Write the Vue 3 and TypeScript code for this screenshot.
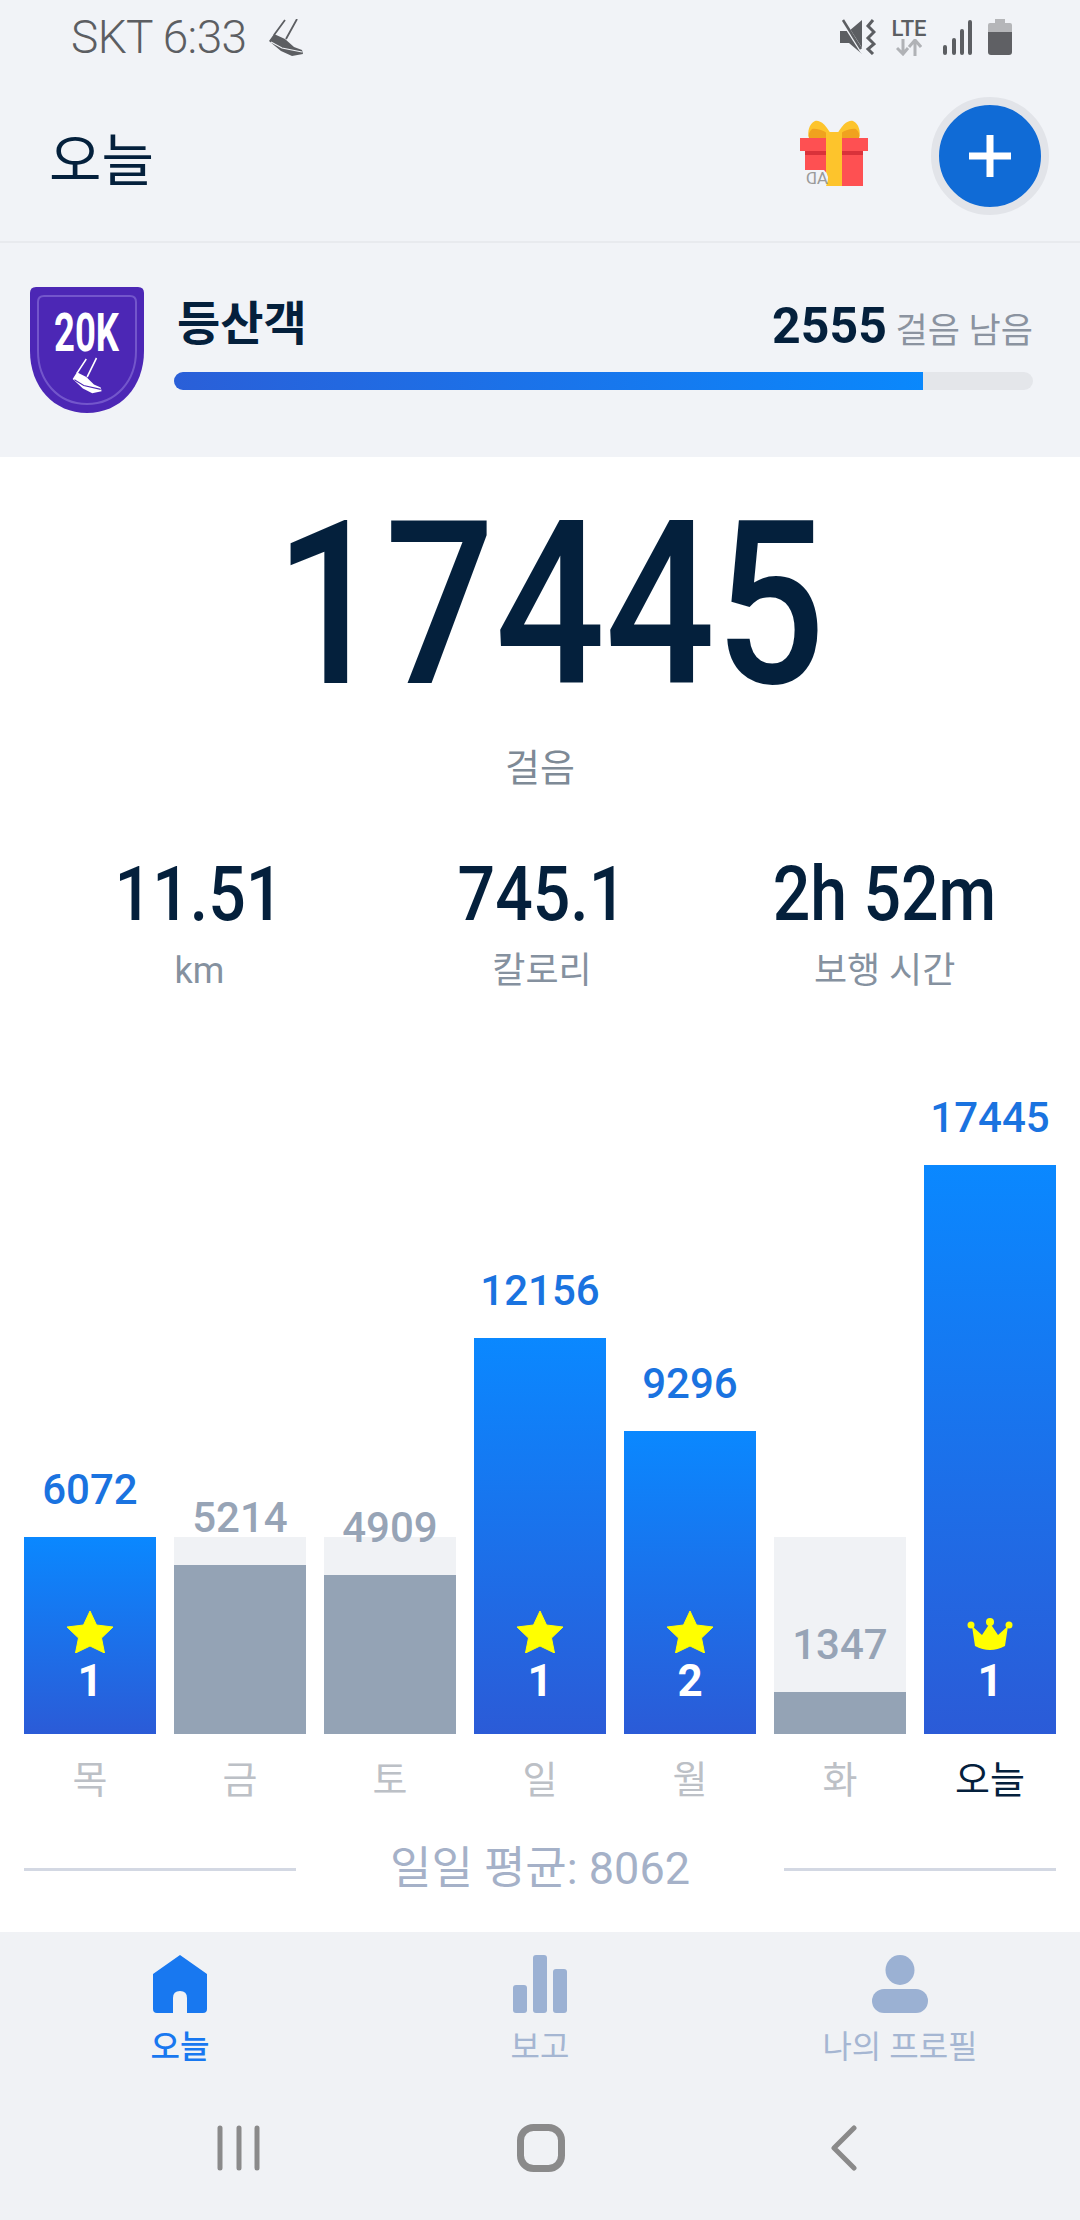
<template>
  <div class="screen">
    <div class="status">
      <div class="status-left">
        <span class="clock">SKT 6:33</span>
        <svg viewBox="0 0 36 37" width="36" height="37">
          <path d="M18 1 L7 16 M30 0 L19 20" stroke="#5c5e62" stroke-width="1.8" fill="none" />
          <path d="M2 22 L7 15 L18 20 L27 28 L35 31 L36 35 L25 37 L14 32 Z" fill="#5c5e62" />
          <path d="M4 23 L15 29 L35 33" stroke="#f1f3f7" stroke-width="1.2" fill="none" />
        </svg>
      </div>
      <div class="status-right">
        <svg viewBox="0 0 36 36" width="36" height="36">
          <path d="M0 12 H9 L22 1 V35 L9 24 H0 Z" fill="#5c5e62" />
          <path d="M2 1 L23 34" stroke="#f1f3f7" stroke-width="4" />
          <path d="M3 1 L21 30" stroke="#5c5e62" stroke-width="2.5" />
          <path d="M33 1 L28 7 L34 13 L28 19 L34 25 L28 30 L33 35" stroke="#5c5e62" stroke-width="3" fill="none" />
        </svg>
        <div class="lte">
          <span>LTE</span>
          <svg viewBox="0 0 26 17" width="26" height="17">
            <path d="M7 0 V14 M1 9 L7 15 L12 9" stroke="#b0b2b6" stroke-width="3" fill="none" />
            <path d="M19 17 V3 M13 8 L19 1 L25 8" stroke="#b0b2b6" stroke-width="3" fill="none" />
          </svg>
        </div>
        <svg viewBox="0 0 31 35" width="31" height="35">
          <path d="M3 27 V33 M12 20 V33 M20 11 V33 M28 2 V33" stroke="#5c5e62" stroke-width="4" stroke-linecap="round" />
        </svg>
        <svg viewBox="0 0 24 36" width="24" height="36">
          <path d="M7 0 H17 V4 H22 Q24 4 24 6 V13 H0 V6 Q0 4 2 4 H7 Z" fill="#b5b6b9" />
          <path d="M0 13 H24 V33 Q24 36 21 36 H3 Q0 36 0 33 Z" fill="#5f6064" />
        </svg>
      </div>
    </div>

    <header class="topbar">
      <h1>오늘</h1>
      <div class="topbar-actions">
        <svg class="gift" viewBox="0 0 68 66" width="68" height="66">
          <path d="M33 18 C26 4 20 0 15 1 C9 4 7 12 9 18 Z" fill="#fdc42c" />
          <path d="M35 18 C42 4 48 0 53 1 C59 4 61 12 59 18 Z" fill="#fdc42c" />
          <path d="M33 18 C27 12 19 8 12 9 C9 12 8 15 9 18 Z M35 18 C41 12 49 8 56 9 C59 12 60 15 59 18 Z" fill="#f0a21e" />
          <rect x="0" y="18" width="68" height="13" fill="#fe5052" />
          <rect x="5" y="31" width="58" height="35" fill="#fe5052" />
          <rect x="5" y="31" width="58" height="4" fill="#d9323a" />
          <rect x="26" y="12" width="16" height="54" fill="#fdc42c" />
          <path d="M0 50 H24 Q31 56 26 66 H0 Z" fill="#f1f3f7" />
          <text x="-28" y="64" transform="scale(-1 1)" class="ad">AD</text>
        </svg>
        <button class="add">
          <svg viewBox="0 0 42 42" width="42" height="42">
            <path d="M21 0 V42 M0 21 H42" stroke="#fff" stroke-width="7" />
          </svg>
        </button>
      </div>
    </header>

    <section class="goal">
      <svg class="badge" viewBox="0 0 114 126" width="114" height="126">
        <path d="M6 0 H108 Q114 0 114 6 V64 C114 100 90 126 57 126 C24 126 0 100 0 64 V6 Q0 0 6 0 Z" fill="#4c27b5" />
        <path d="M14 9 H100 Q106 9 106 15 V64 C106 94 86 117 57 117 C28 117 8 94 8 64 V15 Q8 9 14 9 Z" fill="none" stroke="#7356cb" stroke-width="2" />
        <text x="24" y="64" textLength="65" lengthAdjust="spacingAndGlyphs" class="badge-text">20K</text>
        <g transform="translate(41 71) scale(.85 .95)">
          <path d="M18 1 L7 16 M30 0 L19 20" stroke="#fff" stroke-width="1.8" fill="none" />
          <path d="M2 22 L7 15 L18 20 L27 28 L35 31 L36 35 L25 37 L14 32 Z" fill="#fff" />
          <path d="M4 23 L15 29 L35 33" stroke="#4c27b5" stroke-width="1.2" fill="none" />
        </g>
      </svg>
      <div class="goal-body">
        <div class="goal-top">
          <span class="goal-name">등산객</span>
          <span class="goal-left"><b>2555</b> 걸음 남음</span>
        </div>
        <div class="progress"><div class="progress-fill" :style="{ width: goalPct + '%' }"></div></div>
      </div>
    </section>

    <main class="main">
      <div class="steps"><span>17445</span></div>
      <div class="steps-label">걸음</div>
      <div class="stats">
        <div v-for="s in stats" :key="s.label" class="stat">
          <div class="stat-value"><span>{{ s.value }}</span></div>
          <div class="stat-label">{{ s.label }}</div>
        </div>
      </div>

      <div class="chart">
        <div v-for="d in days" :key="d.label" class="day">
          <div class="plot">
            <div v-if="!d.hit" class="track"></div>
            <div class="column">
              <div class="value" :class="{ hit: d.hit }">{{ d.steps }}</div>
              <div class="bar" :class="{ hit: d.hit }" :style="{ height: d.h + 'px' }">
                <template v-if="d.hit">
                  <svg v-if="d.crown" viewBox="0 0 46 33" width="46" height="33" class="mark crown">
                    <path d="M23 5 L31 17 L41 8 L38 28 Q23 36 8 28 L5 8 L15 17 Z" fill="#ffff00" />
                    <circle cx="23" cy="4" r="4" fill="#ffff00" />
                    <circle cx="4" cy="7" r="3.5" fill="#ffff00" />
                    <circle cx="42" cy="7" r="3.5" fill="#ffff00" />
                  </svg>
                  <svg v-else viewBox="0 0 46 42" width="46" height="42" class="mark">
                    <path d="M23 0 L29.5 14 L46 16 L34.5 27 L37.5 42 L23 35 L8.5 42 L11.5 27 L0 16 L16.5 14 Z" fill="#ffff00" stroke="#ffff00" stroke-linejoin="round" />
                  </svg>
                  <span class="rank">{{ d.rank }}</span>
                </template>
              </div>
            </div>
          </div>
          <div class="day-label" :class="{ today: d.label === '오늘' }">{{ d.label }}</div>
        </div>
      </div>

      <div class="average">
        <span class="rule"></span>
        <span class="average-text">일일 평균: 8062</span>
        <span class="rule"></span>
      </div>
    </main>

    <footer class="footer">
      <nav class="tabs">
        <div class="tab active">
          <svg viewBox="0 0 54 58" width="54" height="58">
            <path d="M27 0 L54 19 V54 Q54 58 50 58 H34 V43 Q34 36 27 36 Q20 36 20 43 V58 H4 Q0 58 0 54 V19 Z" fill="#1878f0" />
          </svg>
          <span>오늘</span>
        </div>
        <div class="tab">
          <svg viewBox="0 0 54 58" width="54" height="58">
            <rect x="0" y="30" width="14" height="28" rx="3" fill="#9bb1d3" />
            <rect x="20" y="0" width="14" height="58" rx="3" fill="#9bb1d3" />
            <rect x="40" y="14" width="14" height="44" rx="3" fill="#9bb1d3" />
          </svg>
          <span>보고</span>
        </div>
        <div class="tab">
          <svg viewBox="0 0 56 58" width="56" height="58">
            <ellipse cx="28" cy="15" rx="14.5" ry="15" fill="#9bb1d3" />
            <rect x="0" y="34" width="56" height="24" rx="12" fill="#9bb1d3" />
          </svg>
          <span>나의 프로필</span>
        </div>
      </nav>
      <div class="sysnav">
        <svg viewBox="0 0 44 46" width="44" height="46">
          <path d="M3 3 V43 M22 3 V43 M40 3 V43" stroke="#8a8a8a" stroke-width="5" stroke-linecap="round" />
        </svg>
        <svg viewBox="0 0 48 48" width="48" height="48">
          <rect x="3.5" y="3.5" width="41" height="41" rx="13" fill="none" stroke="#8a8a8a" stroke-width="7" />
        </svg>
        <svg viewBox="0 0 27 46" width="27" height="46">
          <path d="M24 3 L4 23 L24 43" fill="none" stroke="#8a8a8a" stroke-width="5" stroke-linecap="round" stroke-linejoin="round" />
        </svg>
      </div>
    </footer>
  </div>
</template>

<script setup lang="ts">
interface Day {
  label: string;
  steps: number;
  h: number;
  hit: boolean;
  rank?: number;
  crown?: boolean;
}

const goalPct = 87.2;

const stats = [
  { value: '11.51', label: 'km' },
  { value: '745.1', label: '칼로리' },
  { value: '2h 52m', label: '보행 시간' },
];

const days: Day[] = [
  { label: '목', steps: 6072, h: 197, hit: true, rank: 1 },
  { label: '금', steps: 5214, h: 169, hit: false },
  { label: '토', steps: 4909, h: 159, hit: false },
  { label: '일', steps: 12156, h: 396, hit: true, rank: 1 },
  { label: '월', steps: 9296, h: 303, hit: true, rank: 2 },
  { label: '화', steps: 1347, h: 42, hit: false },
  { label: '오늘', steps: 17445, h: 569, hit: true, rank: 1, crown: true },
];
</script>

<style>
html,
body {
  margin: 0;
  background: #fff;
}
</style>

<style scoped>
.screen {
  width: 1080px;
  height: 2220px;
  display: flex;
  flex-direction: column;
  font-family: Roboto, "Noto Sans CJK KR", sans-serif;
  color: #04203c;
  background: #fff;
  overflow: hidden;
}

.status {
  height: 70px;
  padding: 4px 68px 0 71px;
  box-sizing: border-box;
  display: flex;
  align-items: center;
  justify-content: space-between;
  background: #f1f3f7;
}

.status-left {
  display: flex;
  align-items: center;
  gap: 20px;
}

.clock {
  font-size: 46px;
  font-weight: 300;
  color: #5c5e62;
  letter-spacing: -0.6px;
}

.status-right {
  display: flex;
  align-items: center;
  gap: 15px;
}

.lte {
  display: flex;
  flex-direction: column;
  align-items: center;
  width: 36px;
  font-size: 22px;
  font-weight: 500;
  line-height: 20px;
  color: #5c5e62;
}

.topbar {
  height: 171px;
  padding: 0 31px 0 49px;
  display: flex;
  align-items: center;
  justify-content: space-between;
  background: #f1f3f7;
  border-bottom: 2px solid #e8eaee;
}

.topbar h1 {
  margin: 0;
  font-size: 57px;
  font-weight: 400;
}

.topbar-actions {
  display: flex;
  align-items: center;
  gap: 63px;
}

.gift {
  margin-bottom: 6px;
  overflow: visible;
}

.ad {
  font-family: Roboto, sans-serif;
  font-size: 17px;
  fill: #9a9a9a;
}

.add {
  width: 102px;
  height: 102px;
  box-sizing: content-box;
  padding: 0;
  border: 8px solid #e2e4e9;
  border-radius: 50%;
  background: #106bd6;
  display: flex;
  align-items: center;
  justify-content: center;
}

.goal {
  height: 214px;
  padding: 0 47px 0 30px;
  display: flex;
  align-items: flex-start;
  gap: 30px;
  background: #f1f3f7;
}

.badge {
  margin-top: 44px;
  flex: none;
  overflow: visible;
}

.badge-text {
  font-family: Roboto, sans-serif;
  font-size: 54px;
  font-weight: 700;
  fill: #fff;
}

.goal-body {
  flex: 1;
  margin-top: 45px;
}

.goal-top {
  height: 70px;
  display: flex;
  align-items: flex-end;
  justify-content: space-between;
}

.goal-name {
  margin-left: 3px;
  font-size: 47px;
  font-weight: 700;
  line-height: 68px;
}

.goal-left {
  font-size: 35px;
  color: #8b93a0;
  line-height: 52px;
}

.goal-left b {
  font-size: 50px;
  color: #04203c;
  font-weight: 700;
}

.progress {
  margin-top: 14px;
  height: 18px;
  background: #e4e6ea;
  border-radius: 9px;
  overflow: hidden;
}

.progress-fill {
  height: 100%;
  background: linear-gradient(90deg, #2a5fd8, #0a88fc);
}

.main {
  flex: 1;
  display: flex;
  flex-direction: column;
  align-items: stretch;
  padding: 0 24px;
  background: #fff;
}

.steps {
  margin-top: 28px;
  font-size: 228px;
  font-weight: 500;
  line-height: 240px;
  text-align: center;
}

.steps span {
  display: inline-block;
  margin-left: 20px;
  transform: scaleX(0.85);
}

.steps-label {
  font-size: 38px;
  color: #7e8a96;
  text-align: center;
  line-height: 56px;
  margin-top: 15px;
}

.stats {
  margin-top: 56px;
  padding-left: 4px;
  display: grid;
  grid-template-columns: repeat(3, 1fr);
}

.stat {
  text-align: center;
}

.stat-value {
  font-size: 76px;
  font-weight: 500;
  line-height: 84px;
}

.stat-value span {
  display: inline-block;
  transform: scaleX(0.87);
}

.stat-label {
  font-size: 36px;
  line-height: 48px;
  color: #85919f;
  margin-top: 11px;
}

.chart {
  margin-top: auto;
  display: grid;
  grid-template-columns: repeat(7, 132px);
  gap: 18px;
  align-items: end;
}

.plot {
  display: grid;
  align-items: end;
}

.track,
.column {
  grid-area: 1 / 1;
}

.track {
  height: 197px;
  background: #f0f2f5;
}

.value {
  text-align: center;
  font-size: 42px;
  font-weight: 500;
  line-height: 50px;
  margin-bottom: 22px;
  color: #97a4b6;
}

.value.hit {
  color: #1a73e0;
}

.bar {
  background: #94a3b5;
  display: flex;
  flex-direction: column;
  align-items: center;
  justify-content: flex-end;
  padding-bottom: 28px;
  box-sizing: border-box;
}

.bar.hit {
  background: linear-gradient(180deg, #0a88ff, #2b5bd7);
}

.mark {
  margin-bottom: 3px;
}

.crown {
  margin-bottom: 5px;
}

.rank {
  font-size: 44px;
  font-weight: 700;
  line-height: 50px;
  color: #fff;
}

.day-label {
  margin-top: 20px;
  text-align: center;
  font-size: 38px;
  line-height: 52px;
  color: #bcc0c6;
}

.day-label.today {
  color: #04203c;
}

.average {
  margin-top: 33px;
  margin-bottom: 33px;
  display: flex;
  align-items: center;
  justify-content: space-between;
}

.rule {
  width: 272px;
  height: 3px;
  background: #d3d8e3;
}

.average-text {
  font-size: 45px;
  line-height: 60px;
  color: #a5b1c8;
}

.footer {
  height: 288px;
  background: #f0f2f5;
}

.tabs {
  display: grid;
  grid-template-columns: repeat(3, 1fr);
  padding-top: 23px;
}

.tab {
  display: flex;
  flex-direction: column;
  align-items: center;
  gap: 14px;
  font-size: 32px;
  line-height: 40px;
  color: #a5b6d2;
}

.tab.active {
  color: #1878f0;
  font-weight: 500;
}

.sysnav {
  margin-top: 57px;
  padding: 0 88px;
  display: grid;
  grid-template-columns: repeat(3, 302px);
  justify-items: center;
  align-items: center;
}
</style>
